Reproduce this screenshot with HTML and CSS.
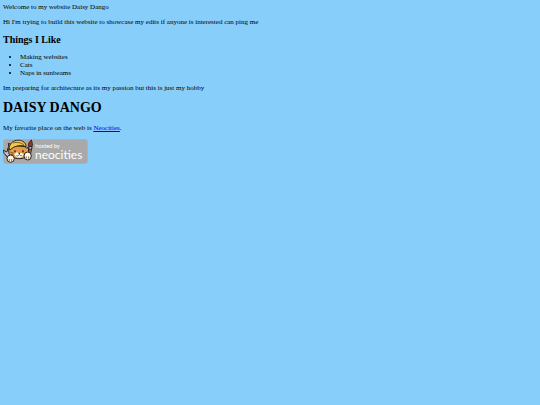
FILE: index.html
```html
<!DOCTYPE html>
<html lang="en">
<head>
    <meta charset="UTF-8">
    <meta name="viewport" content="width=device-width, initial-scale=1.0">
    <title>Daisy Dango</title>
    <link rel="stylesheet" href="styles.css">
</head>
<body>
    <p class="welcome">Welcome to my website Daisy Dango</p>
    <p>Hi I'm trying to build this website to showcase my edits if anyone is interested can ping me</p>

    <h2>Things I Like</h2>
    <ul>
        <li>Making websites</li>
        <li>Cats</li>
        <li>Naps in sunbeams</li>
    </ul>

    <p>Im preparing for architecture as its my passion but this is just my hobby</p>

    <h1>DAISY DANGO</h1>
    <p>My favorite place on the web is <a href="https://neocities.org">Neocities</a>.</p>

    <a class="badge" href="https://neocities.org" aria-label="hosted by neocities">
        <svg class="badge-art" viewBox="0 0 255 75">
            <rect class="plate" x="1" y="1" width="253" height="73" rx="8"/>
            <!-- wrench -->
            <path class="outline metal" d="M2 33l7 6 4-2 1-9c7 4 8 10 5 16l6 12-8 6-8-14c-5-1-8-7-7-15z"/>
            <!-- cat -->
            <path class="outline fur" d="M18 27L16 13l15 6 35 4 5 5 5-4 1 17c1 9-9 17-26 18-19 1-32-8-34-19z"/>
            <path class="muzzle" d="M34 46c4-8 10-8 14-3 5-3 11-1 14 5-4 10-23 12-28-2z"/>
            <path class="outline hat" d="M18 27C22 8 36 2 52 4c12 3 18 12 17 19-13-6-34-4-48 10z"/>
            <path class="line" d="M30 12c12-4 25-1 33 6"/>
            <path class="fill-dark" d="M44 41h9l-4 5z"/>
            <ellipse class="fill-dark" cx="36" cy="37" rx="2" ry="4"/>
            <ellipse class="fill-dark" cx="60" cy="37" rx="2" ry="4"/>
            <path class="line" d="M40 49c4 4 7 2 9-3 3 5 6 5 9 2M22 40l9 2M24 47l8-2"/>
            <!-- paintbrush -->
            <path class="outline handle" d="M79 28l7 1-7 33-6-1z"/>
            <path class="outline metal" d="M78 22l9 1-1 8-9-1z"/>
            <path class="outline bristle" d="M77 22c-2-8 2-14 8-19 3 8 4 14 2 20z"/>
            <!-- paws -->
            <ellipse class="outline paw" cx="23" cy="59" rx="11" ry="11"/>
            <path class="line" d="M19 60v7M26 60v7"/>
            <ellipse class="outline paw" cx="74" cy="51" rx="11" ry="12"/>
            <path class="line" d="M70 52v7M77 52v7"/>
            <text class="hosted" x="97" y="26">hosted by</text>
            <text class="brand" x="96" y="60">neocities</text>
        </svg>
    </a>
</body>
</html>
```

FILE: styles.css
```css
body {
  margin: 3px;
  background-color: #87cefa;
  color: #000;
  font-family: "Liberation Serif", "Times New Roman", serif;
  font-size: 7px;
  line-height: 8px;
}
p {
  margin: 7px 0;
}
.welcome {
  margin-top: 0;
}
h1 {
  margin: 8px 0 9px;
  font-size: 14px;
  line-height: 15px;
}
h2 {
  margin: 8px 0;
  font-size: 10px;
  line-height: 11px;
}
ul {
  margin: 8px 0 6px;
  padding-left: 17px;
}
a {
  color: #0000ee;
}
.badge {
  display: block;
  width: 85px;
}
.badge-art {
  display: block;
  width: 100%;
}

.plate {
  fill: #a9a9a9;
}
.outline {
  stroke: #2b2522;
  stroke-width: 3;
  stroke-linejoin: round;
}
.line {
  fill: none;
  stroke: #4a3524;
  stroke-width: 2;
}
.fill-dark {
  fill: #2b2522;
}
.metal {
  fill: #b9c6d2;
}
.fur {
  fill: #e79a45;
}
.muzzle,
.paw {
  fill: #fff6e8;
}
.hat {
  fill: #f2c744;
}
.handle {
  fill: #b87932;
}
.bristle {
  fill: #a82d2d;
}
.hosted,
.brand {
  fill: #fff;
  font-family: Lato, "Open Sans", sans-serif;
}
.hosted {
  font-size: 17px;
}
.brand {
  font-size: 36px;
}
```
